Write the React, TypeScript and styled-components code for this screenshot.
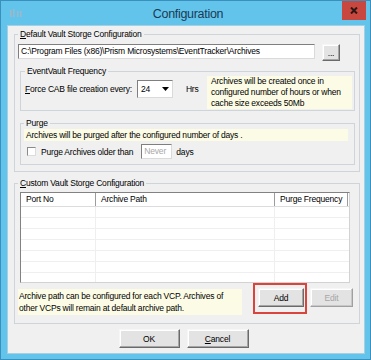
import React from "react";
import styled, { createGlobalStyle } from "styled-components";

const Global = createGlobalStyle`
  html, body { margin: 0; padding: 0; background: #62c4eb; }
  body {
    font-family: "Liberation Sans", Arial, sans-serif;
    font-size: 8.5px;
    letter-spacing: -0.2px;
    color: #000;
  }
  * { box-sizing: border-box; }
`;

const Window = styled.div`
  width: 371px;
  height: 360px;
  border: 1px solid #3b8fbd;
  background: #62c4eb;
  display: flex;
  flex-direction: column;
`;

const TitleBar = styled.div`
  height: 24px;
  flex: none;
  display: grid;
  grid-template-columns: 1fr auto 1fr;
  align-items: center;
  padding: 0 4px 0 9px;
`;

const AppIcon = styled.svg`
  justify-self: start;
  margin-top: 1px;
`;

const Title = styled.div`
  font-size: 12.5px;
  letter-spacing: -0.3px;
  color: #1c3a55;
  margin-top: 1px;
`;

const CloseButton = styled.div`
  justify-self: end;
  align-self: start;
  width: 24px;
  height: 19px;
  background: #c8473f;
  display: flex;
  align-items: center;
  justify-content: center;
`;

const Client = styled.div`
  flex: 1;
  margin: 0 5px 5px 6px;
  background: #f0f0f0;
  border: 1px solid #a6cfe2;
  display: flex;
  flex-direction: column;
`;

const Group = styled.fieldset<{ $m: string; $p: string }>`
  margin: ${(p) => p.$m};
  padding: ${(p) => p.$p};
  border: 1px solid #cdd4da;
  min-width: 0;
  display: flex;
  flex-direction: column;
`;

const Legend = styled.legend`
  padding: 0 2px;
  margin: 0;
  line-height: 10px;
  font-size: 8.5px;
`;

const PathRow = styled.div`
  display: flex;
  align-items: flex-start;
  gap: 7px;
`;

const TextBox = styled.div<{ $w: number; $muted?: boolean }>`
  width: ${(p) => p.$w}px;
  height: 15px;
  background: #fff;
  border: 1px solid;
  border-color: #7f7f7f #dadada #dadada #7f7f7f;
  line-height: 13px;
  padding-left: 2px;
  color: ${(p) => (p.$muted ? "#a8a8a8" : "#000")};
  white-space: nowrap;
  overflow: hidden;
`;

const Button = styled.div<{ $w: number; $h?: number; $disabled?: boolean }>`
  width: ${(p) => p.$w}px;
  height: ${(p) => p.$h ?? 19}px;
  flex: none;
  background: #e3e3e3;
  border: 1px solid;
  border-color: #f6f6f6 #6a6a6a #6a6a6a #f6f6f6;
  box-shadow: inset -1px -1px 0 #a5a5a5, inset 1px 1px 0 #ffffff;
  display: flex;
  align-items: center;
  justify-content: center;
  color: ${(p) => (p.$disabled ? "#a6a6a6" : "#000")};
`;

const FreqRow = styled.div`
  display: flex;
  align-items: flex-start;
`;

const InlineRow = styled.div<{ $mt: number; $h: number }>`
  display: flex;
  align-items: center;
  margin-top: ${(p) => p.$mt}px;
  height: ${(p) => p.$h}px;
  white-space: nowrap;
`;

const Combo = styled.div`
  width: 36px;
  height: 18px;
  margin-left: 5px;
  background: #fff;
  border: 1px solid;
  border-color: #7f7f7f #dadada #dadada #7f7f7f;
  display: flex;
  align-items: center;
  justify-content: space-between;
  padding-left: 3px;
`;

const ComboArrow = styled.div`
  width: 13px;
  height: 16px;
  display: flex;
  align-items: center;
  justify-content: center;
  background: #fff;
`;

const Unit = styled.span<{ $ml: number }>`
  margin-left: ${(p) => p.$ml}px;
`;

const Note = styled.div<{ $w: number; $h: number }>`
  width: ${(p) => p.$w}px;
  height: ${(p) => p.$h}px;
  background: #fcfce6;
  line-height: 11px;
  padding: 0 0 0 4px;
  flex: none;
`;

const FreqNote = styled(Note)`
  margin-left: auto;
  padding-top: 0px;
`;

const Strip = styled.div`
  background: #fcfce6;
  line-height: 12px;
  height: 12px;
  padding: 0 2px;
  margin-right: 3px;
  white-space: nowrap;
`;

const CheckBox = styled.span`
  width: 9px;
  height: 9px;
  margin: 0 5px 0 3px;
  background: #fff;
  border: 1px solid;
  border-color: #8a8a8a #dcdcdc #dcdcdc #8a8a8a;
  flex: none;
`;

const List = styled.div`
  margin-left: 2px;
  width: 330px;
  height: 91px;
  background: #fff;
  border: 1px solid;
  border-color: #828282 #d2d2d2 #d2d2d2 #828282;
  overflow: hidden;
`;

const ListRow = styled.div<{ $header?: boolean }>`
  display: grid;
  grid-template-columns: 75px 179px 73px 1fr;
  height: ${(p) => (p.$header ? 14 : 11)}px;
  border-bottom: 1px solid ${(p) => (p.$header ? "#dcdcdc" : "#efefef")};
`;

const Cell = styled.div<{ $header?: boolean; $last?: boolean }>`
  border-right: ${(p) =>
    p.$last ? "none" : `1px solid ${p.$header ? "#9c9c9c" : "#efefef"}`};
  padding-left: 5px;
  line-height: 13px;
  white-space: nowrap;
`;

const BottomRow = styled.div`
  display: flex;
  align-items: flex-start;
`;

const CustomNote = styled(Note)`
  margin-top: 6px;
  padding: 1px 0 0 1px;
  line-height: 12px;
`;

const Highlight = styled.div`
  margin-left: 11px;
  border: 2px solid #d9443c;
  padding: 3px 1px 5px 3px;
`;

const EditButton = styled(Button)`
  margin: 5px 0 0 3px;
  border-color: #f6f6f6 #a0a0a0 #a0a0a0 #f6f6f6;
  box-shadow: inset -1px -1px 0 #c8c8c8, inset 1px 1px 0 #ffffff;
`;

const DialogButtons = styled.div`
  display: flex;
  justify-content: center;
  gap: 7px;
  margin-top: 5px;
  padding-right: 5px;
`;

const rows = [0, 1, 2, 3, 4, 5, 6];

export default function App() {
  return (
    <>
      <Global />
      <Window>
        <TitleBar>
          <AppIcon width="12" height="9" viewBox="0 0 12 9">
            <rect x="0" y="1" width="1.5" height="7" fill="#9fb7c6" />
            <rect x="3" y="0" width="1.5" height="8" fill="#9fb7c6" />
            <rect x="7" y="2" width="1.5" height="6" fill="#9fb7c6" />
            <rect x="10" y="2" width="1.5" height="6" fill="#9fb7c6" />
          </AppIcon>
          <Title>Configuration</Title>
          <CloseButton>
            <svg width="8" height="7" viewBox="0 0 8 7">
              <path d="M1 0.5 L7 6.5 M7 0.5 L1 6.5" stroke="#2b1714" strokeWidth="2" />
            </svg>
          </CloseButton>
        </TitleBar>
        <Client>
          <Group $m="3px 4px 0 6px" $p="5px 4px 6px 3px">
            <Legend>
              <u>D</u>efault Vault Storge Configuration
            </Legend>
            <PathRow>
              <TextBox $w={297}>
                C:\Program Files (x86)\Prism Microsystems\EventTracker\Archives
              </TextBox>
              <Button $w={18} $h={17}>...</Button>
            </PathRow>
            <Group $m="5px 0 0 2px" $p="0 2px 1px 4px">
              <Legend>EventVault Frequency</Legend>
              <FreqRow>
                <InlineRow $mt={4} $h={18}>
                  <span>
                    <u>F</u>orce CAB file creation every:
                  </span>
                  <Combo>
                    <span>24</span>
                    <ComboArrow>
                      <svg width="7" height="4" viewBox="0 0 7 4">
                        <path d="M0 0 H7 L3.5 4 Z" fill="#000" />
                      </svg>
                    </ComboArrow>
                  </Combo>
                  <Unit $ml={13}>Hrs</Unit>
                </InlineRow>
                <FreqNote $w={145} $h={33}>
                  Archives will be created once in
                  <br />
                  configured number of hours or when
                  <br />
                  cache size exceeds 50Mb
                </FreqNote>
              </FreqRow>
            </Group>
            <Group $m="7px 0 0 2px" $p="1px 3px 5px 3px">
              <Legend>Purge</Legend>
              <Strip>Archives will be purged after the configured number of days .</Strip>
              <InlineRow $mt={3} $h={15}>
                <CheckBox />
                <span>Purge Archives older than</span>
                <Unit $ml={8}>
                  <TextBox $w={31} $muted>
                    Never
                  </TextBox>
                </Unit>
                <Unit $ml={4}>days</Unit>
              </InlineRow>
            </Group>
          </Group>
          <Group $m="6px 4px 0 6px" $p="4px 4px 8px 3px">
            <Legend>
              <u>C</u>ustom Vault Storge Configuration
            </Legend>
            <List>
              <ListRow $header>
                <Cell $header>Port No</Cell>
                <Cell $header>Archive Path</Cell>
                <Cell $header>Purge Frequency</Cell>
                <Cell $last />
              </ListRow>
              {rows.map((r) => (
                <ListRow key={r}>
                  <Cell />
                  <Cell />
                  <Cell $last />
                  <Cell $last />
                </ListRow>
              ))}
            </List>
            <BottomRow>
              <CustomNote $w={224} $h={26}>
                Archive path can be configured for each VCP. Archives of
                <br />
                other VCPs will remain at default archive path.
              </CustomNote>
              <Highlight>
                <Button $w={46}>Add</Button>
              </Highlight>
              <EditButton $w={43} $disabled>
                Edit
              </EditButton>
            </BottomRow>
          </Group>
          <DialogButtons>
            <Button $w={61}>OK</Button>
            <Button $w={62}>
              <span>
                <u>C</u>ancel
              </span>
            </Button>
          </DialogButtons>
        </Client>
      </Window>
    </>
  );
}
